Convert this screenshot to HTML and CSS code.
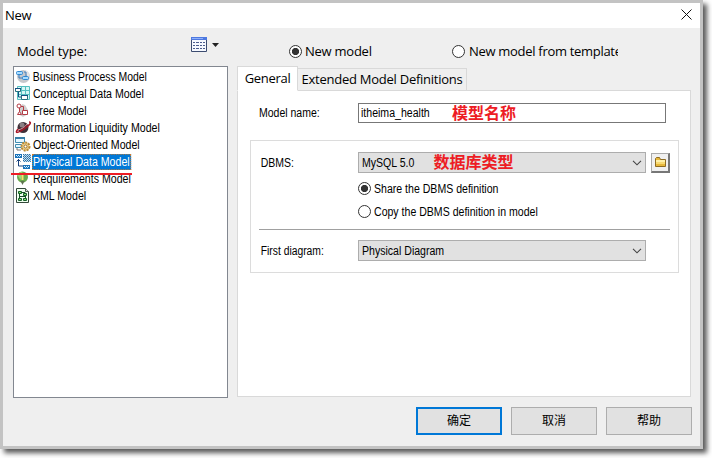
FILE: index.html
```html
<!DOCTYPE html>
<html lang="zh-CN">
<head>
<meta charset="utf-8">
<title>New</title>
<link rel="stylesheet" href="styles.css">
</head>
<body>
<div class="window">
  <header class="titlebar"><span class="t-new">New</span>
    <svg class="close" width="11" height="11" viewBox="0 0 11 11"><path d="M.5.5l10 10M10.5.5l-10 10" stroke="#111" fill="none"/></svg>
  </header>
  <div class="toolbar">
    <span class="type-label">Model type:</span>
    <svg class="view-icon" width="16" height="15" viewBox="0 0 16 15"><path fill="#f6f9ff" stroke="#3c4c70" d="M.5.5h15v14H.5z"/><path fill="#4d78e0" d="M0 0h16v3H0z"/><path fill="#8eb0fa" d="M1 1h11v1H1z"/><path stroke="#4c5d8e" stroke-dasharray="2 1 3 1" d="M2 5.500h12M2 8.500h12M2 11.500h12"/></svg>
    <svg class="caret" width="7" height="4" viewBox="0 0 7 4"><path d="M0 0h7L3.5 4z" fill="#222"/></svg>
    <label class="choice new-model"><i class="radio on"></i><span>New model</span></label>
    <label class="choice template"><i class="radio"></i><span>New model from template</span></label>
  </div>
  <main class="body">
    <ul class="list">
      <li><svg width="17" height="17" viewBox="0 0 17 17"><circle cx="8.500" cy="8.500" r="6.500" fill="#c6c8cc"/><path d="M9 2a6.500 6.500 0 0 1 5 9z" fill="#e7e7e8"/><path d="M4 6v4h4M9 4h2v4" fill="none" stroke="#3878b8"/><g fill="#a8dcff" stroke="#2e87d0"><rect x="1.500" y="3.500" width="6" height="3" rx="1"/><rect x="7.500" y="8.500" width="6" height="3" rx="1"/></g></svg><span class="n1">Business Process Model</span></li>
      <li><svg width="17" height="17" viewBox="0 0 17 17"><path d="M2.500 1.500h12v13h-12zM6.500 1v14M10.500 1v14M2 5.500h13M2 9.500h13" fill="#d5f7f5" stroke="#53bfc0"/><path d="M3.500 7v5h4" fill="none" stroke="#164d80"/><g fill="#fff" stroke="#267080"><path d="M.5 3.500h5v3h-5zM6.500 10.500h6v4h-6z"/></g><path d="M0 3h6v1H0zM6 10h7v1H6z" fill="#164d80"/></svg><span>Conceptual Data Model</span></li>
      <li><svg width="17" height="17" viewBox="0 0 17 17"><path d="M7 2l3 1 3 5v4l-5 3-5-3z" fill="#cfcfcf"/><path d="M4.500 5v5M6 4.500h2.500v4" fill="none" stroke="#b33b45"/><g fill="#fff" stroke="#b33b45"><circle cx="4" cy="4" r="2"/><path d="M2.500 12.500l2-3 2 3zM7.500 8.500h5v4h-5z"/></g></svg><span>Free Model</span></li>
      <li><svg width="17" height="17" viewBox="0 0 17 17"><circle cx="8" cy="8.500" r="5.500" fill="#3e3038"/><circle cx="7" cy="6" r="2.500" fill="#8b7f84"/><path d="M3 10c-4 5 0 4 6 0s8-7 5-7" fill="none" stroke="#a81425" stroke-width="1.500"/><path d="M3 11c4-1 7-3 9-6" stroke="#e88b94" fill="none"/></svg><span>Information Liquidity Model</span></li>
      <li><svg width="17" height="17" viewBox="0 0 17 17"><path d="M.5 1.500h9v5h-9zM.5 8.500h6v3h-6z" fill="#e5f6ff" stroke="#418db0"/><path d="M0 1h10v2H0z" fill="#377da6"/><path d="M2 12v2h4" stroke="#777" fill="none"/><circle cx="10.500" cy="10.500" r="4" fill="#eed08b" stroke="#b98b38" stroke-width="2" stroke-dasharray="2 1"/><circle cx="10.500" cy="10.500" r="1.500" fill="#fff" stroke="#9b732b"/></svg><span>Object-Oriented Model</span></li>
      <li class="selected"><svg width="17" height="17" viewBox="0 0 17 17"><path d="M8 1h8v8H8z" fill="#c7dded"/><path d="M8 1.500h8M8 3.500h8M8 5.500h8M8 7.500h8" stroke="#286ca3" stroke-dasharray="1 1"/><path d="M9 2.500h7M9 4.500h7M9 6.500h7M9 8.500h7" stroke="#4288b8" stroke-dasharray="1 1"/><path d="M0 1h7v4H0zM8 12h7v4H8z" fill="#1b73ba"/><path d="M1 2.500h5M9 13.500h5" stroke="#e6f6ff" stroke-dasharray="1 1"/><path d="M2 3.500h4M10 14.500h4" stroke="#b2e0ff" stroke-dasharray="1 1"/><path d="M3.500 6v7H8M1.500 8.500l2-2 2 2" fill="none" stroke="#173f7a"/></svg><span>Physical Data Model</span></li>
      <li><svg width="17" height="17" viewBox="0 0 17 17"><circle cx="7.500" cy="7" r="5.500" fill="#6ba94e"/><path d="M2.500 5c1-3 4-4 5-3L5.500 10z" fill="#9bd67d"/><path d="M6.500 3h2v7h-2z" fill="#f4e16d"/><path d="M5.500 11h4l-2 4z" fill="#5e7350"/></svg><span>Requirements Model</span></li>
      <li><svg width="17" height="17" viewBox="0 0 17 17"><path d="M1.500 1.500h9l3 3v11h-12z" fill="#f0fff0" stroke="#33483a"/><path d="M10.500 1.500v3h3" fill="#ddd" stroke="#526052"/><g fill="#7de46d" stroke="#175d29"><path d="M3.500 4.500h3v2h-3zM8.500 6.500h3v2h-3zM3.500 11.500h3v2h-3zM8.500 11.500h3v2h-3z"/></g><path d="M7 5.500h3v1M4.500 9.500h6M4.500 7v4M10.500 9v2" fill="none" stroke="#174d29"/></svg><span>XML Model</span></li>
    </ul>
    <section class="notebook">
      <nav class="tabs"><span class="tab active">General</span><span class="tab extended">Extended Model Definitions</span></nav>
      <div class="panel">
        <div class="row name-row"><label class="small">Model name:</label><div class="input"><span>itheima_health</span><b class="note">模型名称</b></div></div>
        <div class="group">
          <div class="row"><label class="small">DBMS:</label><div class="combo"><span>MySQL 5.0</span><b class="note">数据库类型</b><svg class="chev" width="10" height="6" viewBox="0 0 10 6"><path d="M1 .8l4 4 4-4" fill="none" stroke="#444" stroke-width="1.100"/></svg></div>
            <button class="folder"><svg width="13" height="12" viewBox="0 0 13 12"><path d="M1.500 2.500l1-1h3l1 2h5v7h-10z" fill="#e7b83b" stroke="#8d6b22"/><path d="M2 4h9v2H2z" fill="#fff0a8"/><path d="M2 6h9v2H2z" fill="#f8da72"/></svg></button></div>
          <label class="choice share"><i class="radio on"></i><span>Share the DBMS definition</span></label>
          <label class="choice copy"><i class="radio"></i><span>Copy the DBMS definition in model</span></label>
          <hr>
          <div class="row"><label class="small first">First diagram:</label><div class="combo"><span>Physical Diagram</span><svg class="chev" width="10" height="6" viewBox="0 0 10 6"><path d="M1 .8l4 4 4-4" fill="none" stroke="#444" stroke-width="1.100"/></svg></div></div>
        </div>
      </div>
    </section>
  </main>
  <footer class="actions"><button class="btn primary">确定</button><button class="btn">取消</button><button class="btn">帮助</button></footer>
  <div class="mark"></div>
</div>
</body>
</html>
```
FILE: styles.css
```css
*{box-sizing:border-box}
html,body{height:458px}
body{margin:0;background:#fff;color:#000;overflow:hidden;font:13px "Open Sans","Noto Sans CJK SC",sans-serif}
svg{display:block;flex:none}
span{white-space:nowrap}
button{font:inherit;padding:0;border-radius:0}
.window{position:relative;width:703px;height:449px;border:3px solid #c3c3c3;background:#efefef;box-shadow:4px 4px 5px rgba(0,0,0,.65)}
.titlebar{height:25px;background:#fff;display:flex;align-items:center;padding:0 8px 2px 2px}
.t-new{letter-spacing:-.3px}
.close{margin-left:auto}
.toolbar{height:38px;display:flex;align-items:flex-start;padding-left:14px}
.type-label{width:174px;line-height:18px;margin-top:14px;letter-spacing:-.1px}
.view-icon{margin-top:9px}
.caret{margin:15px 0 0 5px}
.choice{display:flex;align-items:center;gap:3px}
.new-model{width:163px;height:18px;margin:14px 0 0 70px;letter-spacing:-.25px}
.template{width:166px;height:18px;margin-top:14px;overflow:hidden;gap:4px;letter-spacing:-.3px}
.radio{width:13px;height:13px;border:1px solid #333;border-radius:50%;background:#fff;flex:none}
.radio.on{background:radial-gradient(circle,#333 0 3.2px,#fff 4px)}
.body{display:flex;height:332px;padding-left:10px;gap:9px}
.list{width:215px;height:332px;margin:0;padding:1px 0 0 1px;list-style:none;border:1px solid #828790;background:#fff;font:12px "Liberation Sans",sans-serif}
.list li{height:17px;display:flex;align-items:center}
.list span{padding:0 2px 0 1px;height:16px;line-height:17px;transform:scaleX(.885);transform-origin:left}
.list .n1{transform:scaleX(.868)}
.selected span{background:#0078d7;color:#fff;outline:1px dotted #c67b31;outline-offset:-1px}
.notebook{width:454px;height:331px}
.tabs{display:flex;height:25px;align-items:flex-end;position:relative}
.tab{border:1px solid #d9d9d9;text-align:center}
.active{width:61px;height:25px;background:#fff;border-bottom-color:#fff;line-height:22px;letter-spacing:-.3px}
.extended{width:169px;height:23px;line-height:21px;border-left:0;letter-spacing:-.25px}
.panel{height:307px;margin-top:-1px;background:#fff;border:1px solid #d9d9d9;padding:12px 10px 0 12px}
.row{display:flex;align-items:center}
.small{font:12px "Liberation Sans",sans-serif;transform:scaleX(.875);transform-origin:left}
.name-row{padding-left:9px}
.name-row .small{width:99px}
.input,.combo,.share,.copy{font:12px "Liberation Sans",sans-serif}
.input span,.combo span,.share span,.copy span{transform:scaleX(.88);transform-origin:left}
.input{width:308px;height:20px;border:1px solid #777;display:flex;align-items:center;padding-left:2px}
.note{color:#ed1c24;font:bold 16px "Noto Sans CJK SC",sans-serif;line-height:14px;padding-bottom:3px;white-space:nowrap}
.input .note{margin-left:auto;margin-right:149px}
.group{width:429px;height:133px;margin-top:17px;border:1px solid #dcdcdc;padding:11px 8px 0}
.group .row .small{width:99px;padding-left:2px}
.group .row .first{transform:scaleX(.86)}
.combo{width:288px;height:21px;border:1px solid #adadad;background:#e1e1e1;display:flex;align-items:center;padding:0 3px}
.combo .note{margin-left:12px;padding-bottom:4px}
.chev{margin-left:auto}
.folder{width:19px;height:20px;margin-left:5px;background:#f0f0f0;border:1px solid #aaa;border-right:2px solid #777;border-bottom:2px solid #777;display:grid;place-items:center}
.share,.copy{height:23px;margin-left:99px}
.share{margin-top:4px}
hr{margin:6px 0 10px;border:0;height:1px;background:#a0a0a0}
.actions{display:flex;gap:9px;padding:9px 0 0 413px}
.btn{width:86px;height:28px;background:#e1e1e1;border:1px solid #adadad;padding-bottom:3px;font:12px "Noto Sans CJK SC",sans-serif}
.primary{border:2px solid #0078d7}
.mark{position:absolute;left:8px;top:170px;width:121px;height:2px;background:#ed1c24}
```
